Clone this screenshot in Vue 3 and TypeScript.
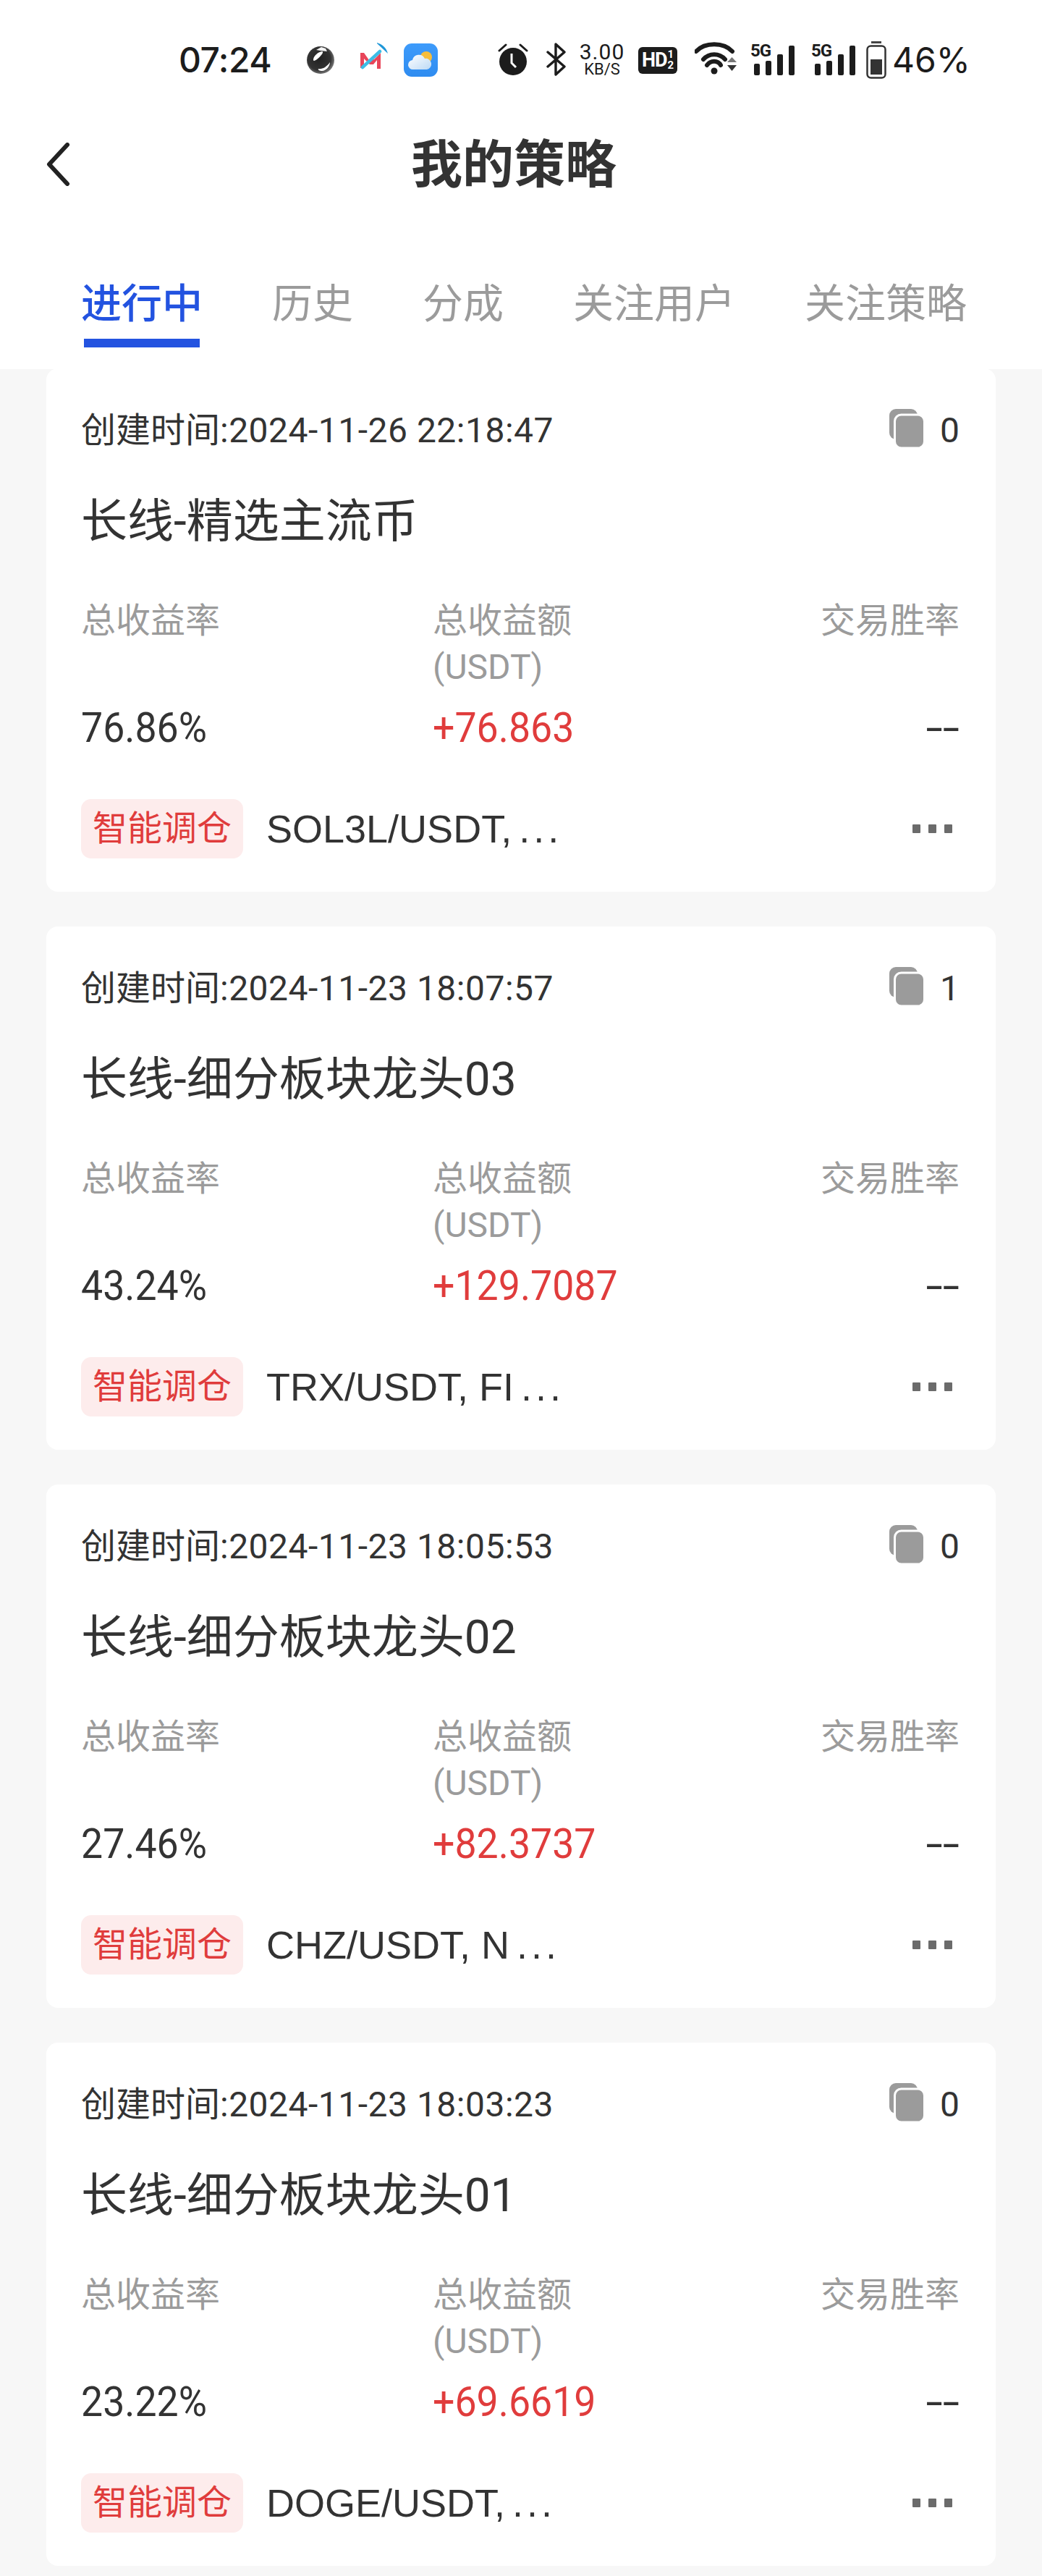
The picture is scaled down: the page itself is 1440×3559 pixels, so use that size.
<script setup lang="ts">
interface Strategy {
  created: string
  copies: number
  name: string
  rate: string
  profit: string
  pairs: string
}

const tabs: string[] = ['进行中', '历史', '分成', '关注用户', '关注策略']

const strategies: Strategy[] = [
  { created: '2024-11-26 22:18:47', copies: 0, name: '长线-精选主流币', rate: '76.86%', profit: '+76.863', pairs: 'SOL3L/USDT,' },
  { created: '2024-11-23 18:07:57', copies: 1, name: '长线-细分板块龙头03', rate: '43.24%', profit: '+129.7087', pairs: 'TRX/USDT, FI' },
  { created: '2024-11-23 18:05:53', copies: 0, name: '长线-细分板块龙头02', rate: '27.46%', profit: '+82.3737', pairs: 'CHZ/USDT, N' },
  { created: '2024-11-23 18:03:23', copies: 0, name: '长线-细分板块龙头01', rate: '23.22%', profit: '+69.6619', pairs: 'DOGE/USDT,' }
]
</script>

<template>
  <div class="page">
    <header class="top">
      <div class="status">
        <span class="clock">07:24</span>

        <!-- notification icons -->
        <svg class="ic-orb" width="38" height="38" viewBox="0 0 38 38">
          <defs>
            <radialGradient id="orb" cx="45%" cy="45%" r="60%">
              <stop offset="0" stop-color="#222" />
              <stop offset="0.7" stop-color="#333" />
              <stop offset="1" stop-color="#8a8a8a" />
            </radialGradient>
          </defs>
          <circle cx="19" cy="19" r="19" fill="url(#orb)" />
          <path d="M9 18c1-6 7-10 12-11 2 0 1 3-1 5-3 4-8 8-10 8-1 0-1-1-1-2z" fill="#fff" />
          <path d="M16 31c5 1 11-2 16-9 0 5-5 12-11 12-3 0-6-1-5-3z" fill="#fff" />
          <path d="M13 5l7-4 6 2 2 4-9-1z" fill="#f4f4f4" />
        </svg>
        <svg class="ic-m" width="38" height="38" viewBox="0 0 38 38">
          <path d="M0 14h5l7 10 7-1 9-9v22h-5V24l-5 6h-5L5 22v13H0z" fill="#e8465a" />
          <path d="M3 34L27 12" stroke="#3cbde6" stroke-width="4.500" stroke-linecap="round" />
          <path d="M23 0c7 2 13 7 15 15L23 1z" fill="#1f97d8" />
        </svg>
        <svg class="ic-weather" width="47" height="46" viewBox="0 0 47 46">
          <defs>
            <linearGradient id="sky" x1="0" y1="0" x2="0" y2="1">
              <stop offset="0" stop-color="#3d9bfb" />
              <stop offset="1" stop-color="#2f8cf0" />
            </linearGradient>
            <linearGradient id="cloud" x1="0" y1="0" x2="1" y2="1">
              <stop offset="0" stop-color="#ffffff" />
              <stop offset="1" stop-color="#bcd9f5" />
            </linearGradient>
          </defs>
          <rect width="47" height="46" rx="11" fill="url(#sky)" />
          <circle cx="31" cy="19" r="8" fill="#f7bd3a" />
          <path d="M13 36a6.500 6.500 0 0 1-1-13 9 9 0 0 1 17-2 7.500 7.500 0 0 1 3 15z" fill="url(#cloud)" />
        </svg>

        <!-- system indicators -->
        <svg class="ic-alarm" width="42" height="46" viewBox="0 0 42 46">
          <path d="M2 11L11 3M40 11L31 3" stroke="#1c1c1c" stroke-width="3" stroke-linecap="round" />
          <circle cx="21" cy="26" r="19" fill="#1c1c1c" />
          <path d="M19 15v13l6 6" stroke="#fff" stroke-width="3" fill="none" />
        </svg>
        <svg class="ic-bt" width="28" height="46" viewBox="0 0 28 46">
          <path d="M2 13L25 33 13 44V2l12 11L2 33" fill="none" stroke="#1c1c1c" stroke-width="3.400" stroke-linejoin="round" stroke-linecap="round" />
        </svg>
        <div class="speed">
          <span class="speed-num">3.00</span>
          <span class="speed-unit">KB/S</span>
        </div>
        <div class="hd"><span class="hd-text">HD</span><span class="hd-frac"><i>1</i><i>2</i></span></div>
        <svg class="ic-wifi" width="58" height="46" viewBox="0 0 58 46">
          <path d="M2 14C14 1 40 1 52 14" fill="none" stroke="#1c1c1c" stroke-width="6" stroke-linecap="round" />
          <path d="M12 25C20 16 34 16 42 25" fill="none" stroke="#1c1c1c" stroke-width="6" stroke-linecap="round" />
          <path d="M17 33C22 26 32 26 36 33" fill="none" stroke="#1c1c1c" stroke-width="6" stroke-linecap="round" />
          <circle cx="27" cy="41" r="4.500" fill="#1c1c1c" />
          <path d="M45 29h13l-6.500-7z" fill="#777" />
          <path d="M45 33h13l-6.500 8z" fill="#333" />
        </svg>
        <div v-for="sim in 2" :key="sim" class="signal">
          <span class="signal-tag">5G</span>
          <i class="bar b1"></i><i class="bar b2"></i><i class="bar b3"></i><i class="bar b4"></i>
        </div>
        <svg class="ic-batt" width="28" height="52" viewBox="0 0 28 52">
          <rect x="7" y="0" width="14" height="3" fill="#444" />
          <rect x="1.500" y="6.500" width="25" height="44" rx="5" fill="none" stroke="#333" stroke-width="2.500" />
          <rect x="6" y="25" width="16" height="21" fill="#333" />
        </svg>
        <span class="level">46%</span>
      </div>

      <div class="nav">
        <svg class="back" width="34" height="60" viewBox="0 0 34 60">
          <path d="M30 3L5 30l25 27" fill="none" stroke="#222" stroke-width="6" stroke-linecap="round" stroke-linejoin="round" />
        </svg>
        <h1 class="heading">我的策略</h1>
      </div>

      <nav class="tabs">
        <span v-for="(tab, i) in tabs" :key="tab" class="tab" :class="{ active: i === 0 }">{{ tab }}</span>
      </nav>
    </header>

    <main class="list">
      <article v-for="item in strategies" :key="item.name" class="card">
        <div class="meta">
          <span class="created"><span class="cjk">创建时间</span>:{{ item.created }}</span>
          <span class="copies">
            <svg width="48" height="54" viewBox="0 0 48 54">
              <rect x="0" y="0" width="39" height="42" rx="9" fill="#9b9b9b" />
              <rect x="7.500" y="8" width="41" height="46" rx="9" fill="#9b9b9b" stroke="#fff" stroke-width="3" />
            </svg>
            <span class="copies-num">{{ item.copies }}</span>
          </span>
        </div>

        <h2 class="name">{{ item.name }}</h2>

        <div class="stats">
          <div class="stat">
            <div class="label">总收益率</div>
            <div class="value"><span class="squeeze">{{ item.rate }}</span></div>
          </div>
          <div class="stat">
            <div class="label">总收益额<br />(USDT)</div>
            <div class="value up"><span class="squeeze">{{ item.profit }}</span></div>
          </div>
          <div class="stat end">
            <div class="label">交易胜率</div>
            <div class="value"><span class="squeeze wide">--</span></div>
          </div>
        </div>

        <div class="foot">
          <span class="tag">智能调仓</span>
          <span class="pairs">{{ item.pairs }}<span class="more">...</span></span>
          <span class="dots"><i></i><i></i><i></i></span>
        </div>
      </article>
    </main>
  </div>
</template>

<style>
html,
body {
  margin: 0;
  background: #f7f7f7;
}
</style>

<style scoped>
.page {
  width: 1440px;
  height: 3559px;
  overflow: hidden;
  background: #f7f7f7;
  font-family: Roboto, "Noto Sans CJK SC", sans-serif;
  color: #333;
}

.top {
  position: relative;
  z-index: 1;
  height: 510px;
  background: #fff;
}

.status {
  height: 166px;
  display: flex;
  align-items: center;
  padding-left: 247px;
  color: #1c1c1c;
  box-sizing: border-box;
}

.clock {
  width: 127px;
  font: 500 48px/1 Inter, sans-serif;
  letter-spacing: -0.5px;
}
.ic-orb { margin-left: 50px; flex: none; }
.ic-m { margin-left: 36px; margin-top: -10px; flex: none; }
.ic-weather { margin-left: 22px; flex: none; }
.ic-alarm { margin-left: 83px; flex: none; margin-top: -2px; }
.ic-bt { margin-left: 25px; flex: none; margin-top: -2px; }

.speed {
  margin-left: 15px;
  width: 68px;
  display: flex;
  flex-direction: column;
  align-items: center;
  line-height: 1;
}
.speed-num { font: 400 30px/26px Roboto, sans-serif; letter-spacing: 1px; }
.speed-unit { font: 400 22px/22px Roboto, sans-serif; }

.hd {
  margin-left: 16px;
  width: 54px;
  height: 37px;
  border-radius: 6px;
  background: #1c1c1c;
  color: #fff;
  display: flex;
  align-items: center;
  justify-content: center;
  gap: 1px;
}
.hd-text { font: 700 27px/1 Roboto, sans-serif; letter-spacing: -1px; }
.hd-frac { display: flex; flex-direction: column; }
.hd-frac i { font: 700 15px/15px Roboto, sans-serif; }

.ic-wifi { margin-left: 24px; flex: none; margin-top: -6px; }

.signal {
  position: relative;
  width: 61px;
  height: 44px;
  margin-left: 19px;
  display: flex;
  align-items: flex-end;
  margin-top: -3px;
}
.signal + .signal { margin-left: 23px; }
.signal-tag {
  position: absolute;
  left: 0;
  top: -3px;
  font: 700 24px/26px Roboto, sans-serif;
  letter-spacing: -1px;
}
.bar {
  position: absolute;
  bottom: 0;
  width: 8px;
  background: #1c1c1c;
  border-radius: 2px;
}
.b1 { left: 5px; height: 16px; }
.b2 { left: 21px; height: 20px; }
.b3 { left: 37px; height: 29px; }
.b4 { left: 53px; height: 41px; }

.ic-batt { margin-left: 15px; flex: none; }
.level {
  margin-left: 8px;
  font: 400 48px/1 Inter, sans-serif;
}

.nav {
  height: 122px;
  position: relative;
  display: flex;
  align-items: center;
  justify-content: center;
  padding-right: 20px;
}
.back {
  position: absolute;
  left: 63px;
  top: 31px;
}
.heading {
  margin: 0;
  font-size: 71px;
  font-weight: 700;
  line-height: 1;
  color: #333;
}

.tabs {
  display: flex;
  gap: 96px;
  padding: 98px 0 0 112px;
}
.tab {
  position: relative;
  font-size: 56px;
  line-height: 68px;
  color: #9b9b9b;
  white-space: nowrap;
}
.tab.active {
  color: #2353e0;
  font-weight: 500;
}
.tab.active::after {
  content: "";
  position: absolute;
  left: 4px;
  width: 160px;
  top: 82px;
  height: 12px;
  background: #2353e0;
}

.list {
  display: flex;
  flex-direction: column;
  gap: 48px;
  margin-top: -1px;
  padding: 0 64px;
}

.card {
  height: 723px;
  box-sizing: border-box;
  padding: 58px 50px 0 48px;
  background: #fff;
  border-radius: 16px;
}

.meta {
  display: flex;
  justify-content: space-between;
  align-items: center;
  height: 56px;
}
.created {
  font-size: 48px;
  line-height: 56px;
  letter-spacing: 0.5px;
  white-space: nowrap;
}
.created .cjk { letter-spacing: 0; }
.copies {
  display: flex;
  align-items: center;
  gap: 22px;
}
.copies svg { overflow: visible; margin-top: -6px; }
.copies-num {
  font-size: 48px;
  line-height: 56px;
  min-width: 21px;
  text-align: right;
}

.name {
  margin: 62px 0 0;
  font-size: 64px;
  line-height: 72px;
  font-weight: 400;
  color: #333;
  white-space: nowrap;
}

.stats {
  margin-top: 69px;
  display: grid;
  grid-template-columns: 486px 1fr 1fr;
}
.label {
  min-height: 128px;
  font-size: 48px;
  line-height: 64px;
  color: #9b9b9b;
}
.value {
  margin-top: 17px;
  font-size: 58px;
  line-height: 68px;
  color: #333;
}
.value.up { color: #e03c3c; }
.squeeze {
  display: inline-block;
  transform: scaleX(0.925);
  transform-origin: left center;
}
.end { text-align: right; }
.end .squeeze { transform-origin: right center; }
.end .squeeze.wide { transform: scaleX(1.45); }

.foot {
  margin-top: 65px;
  display: flex;
  align-items: center;
  position: relative;
  height: 82px;
}
.tag {
  width: 224px;
  height: 82px;
  box-sizing: border-box;
  border-radius: 14px;
  background: #fdecec;
  color: #e03c3c;
  font-size: 48px;
  line-height: 82px;
  text-align: center;
  white-space: nowrap;
}
.pairs {
  margin-left: 32px;
  font-family: "Liberation Sans", "Noto Sans CJK SC", sans-serif;
  font-size: 54px;
  line-height: 84px;
  color: #333;
  white-space: nowrap;
}
.more { margin-left: 10px; letter-spacing: 5px; }
.dots {
  position: absolute;
  right: 10px;
  top: 35px;
  display: flex;
  gap: 11px;
}
.dots i {
  width: 11px;
  height: 12px;
  background: #6b6b6b;
  border-radius: 1px;
}
</style>
